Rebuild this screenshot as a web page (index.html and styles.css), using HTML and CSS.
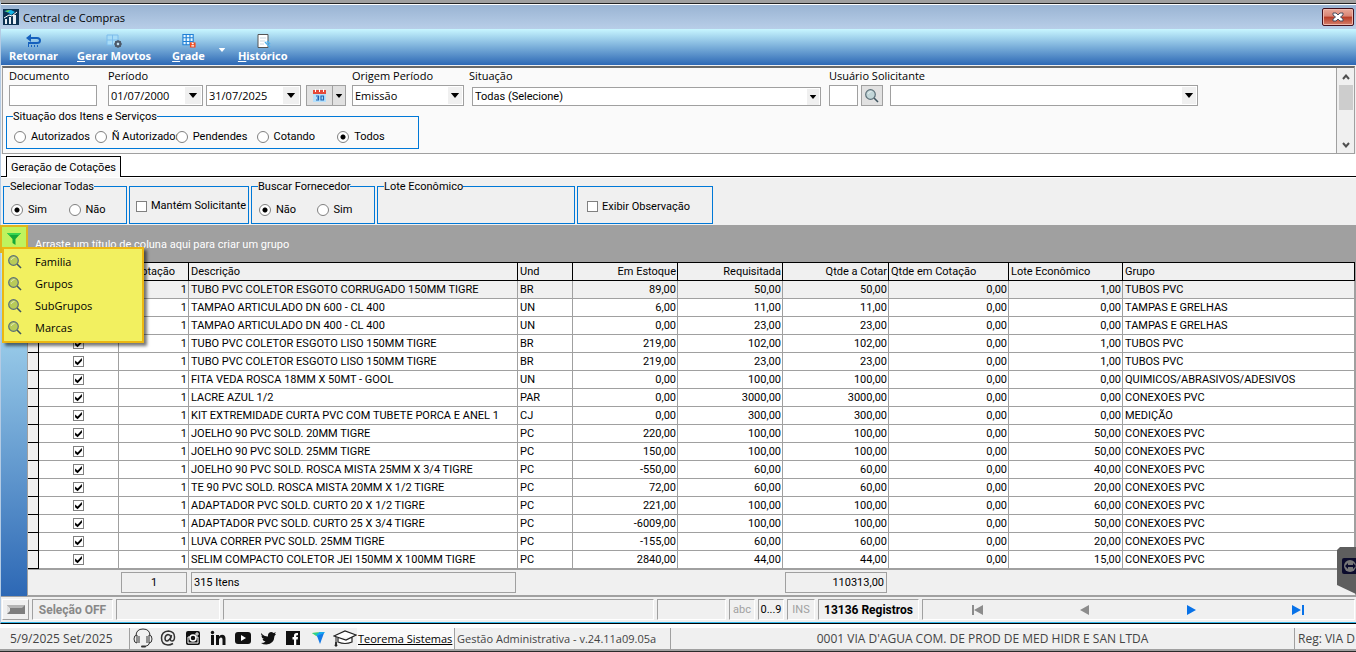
FILE: index.html
```html
<!DOCTYPE html>
<html lang="pt-BR">
<head>
<meta charset="utf-8">
<title>Central de Compras</title>
<link rel="stylesheet" href="styles.css">
</head>
<body>
<svg width="0" height="0" class="defs" aria-hidden="true">
  <symbol id="lens" viewBox="0 0 16 16"><path d="M10 10l4 4" stroke="#3f5560" stroke-width="1.600"/><circle cx="6.500" cy="6.500" r="4.800" fill="currentColor" stroke="#5c6f78" stroke-width="1.200"/><path d="M4 6q1-2.500 3.500-2.500" fill="none" stroke="#fff" opacity=".6"/></symbol>
  <symbol id="down" viewBox="0 0 10 6"><path d="M0 0h10L5 6z" fill="currentColor"/></symbol>
</svg>
<div class="window">
  <header class="titlebar">
    <svg class="app-icon" viewBox="0 0 16 16"><rect width="16" height="16" fill="#0c3152"/><path d="M1 2l7-1 4 2-4 3-2-2z" fill="#12b5e8"/><path d="M2 2l5-1-2 2z" fill="#7ee03a"/><path d="M2 15v-5h2v5zM6 15V8h2v7zM10 15V6h3v9z" fill="#e6eef5"/><path d="M1 9l5-3 3 1 5-4" stroke="#fff" fill="none"/></svg>
    <h1>Central de Compras</h1>
    <button class="close" aria-label="Fechar"><svg viewBox="0 0 12 10"><path d="M1 1h3l2 2 2-2h3v2L8.500 5 11 7v2H8L6 7 4 9H1V7l2.500-2L1 3z" fill="#fff" stroke="#4a4f60"/></svg></button>
  </header>
  <nav class="toolbar">
    <button class="tool t-ret"><svg viewBox="0 0 16 14"><path d="M4 4h7q3 0 3 2.500T11 9H2" fill="none" stroke="#1560bd" stroke-width="2"/><path d="M5 0v8L0 4z" fill="#1560bd"/><path d="M2.500 10v3M5.500 11v2M8.500 11v2M11.500 11v2" stroke="#1560bd"/></svg><span>Retornar</span></button>
    <button class="tool t-ger"><svg viewBox="0 0 16 14"><path d="M1 1h11v10H1zM6.500 1v10M1 6h11" fill="#a8dcf7" stroke="#7cbcec"/><circle cx="12" cy="10" r="2.400" fill="none" stroke="#4d5968" stroke-width="2"/><path d="M12 6v8M8 10h8M9.200 7.200l5.600 5.600M14.800 7.200l-5.600 5.600" stroke="#4d5968"/><circle cx="12" cy="10" r="1.200" fill="#c8e4f4"/></svg><span><u>G</u>erar Movtos</span></button>
    <button class="tool t-gra"><svg viewBox="0 0 16 15"><path d="M1.500.5h11v11h-11zM5 .5v11M9 .5v11M1.500 4h11M1.500 8h11" fill="#e8f8ff" stroke="#1f7fd6" stroke-width="1.200"/><rect x="9" y="9" width="6" height="5.500" fill="#f04a1c"/><path d="M11 9.500h2v1.500h-2zM10.500 12h3v1.500h-3z" fill="#fff"/></svg><span><u>G</u>rade</span></button>
    <button class="tool-more" aria-label="Mais opções de grade"><svg viewBox="0 0 10 6"><use href="#down"/></svg></button>
    <button class="tool t-his"><svg viewBox="0 0 16 14"><path d="M3 .5h10v13H3z" fill="#fff" stroke="#555"/><path d="M5 4h6M5 7h5M5 10h4" stroke="#c9d6df"/><path d="M10 8l5 5M12 7l3 3" stroke="#4fb2ee" stroke-width="1.500"/></svg><span><u>H</u>istórico</span></button>
  </nav>

  <section class="filters">
    <div class="filters-main">
      <div class="filter-row">
        <div class="field f-doc"><label for="doc">Documento</label><input id="doc" type="text"></div>
        <div class="field f-per"><label for="d1">Período</label>
          <div class="line">
            <div class="combo date"><input id="d1" type="text" value="01/07/2000"><button aria-label="Abrir calendário inicial"><svg viewBox="0 0 10 6"><use href="#down"/></svg></button></div>
            <div class="combo date"><input aria-label="Data final" type="text" value="31/07/2025"><button aria-label="Abrir calendário final"><svg viewBox="0 0 10 6"><use href="#down"/></svg></button></div>
            <div class="split"><button aria-label="Calendário"><svg viewBox="0 0 13 14"><path d="M0 1h13v4H0z" fill="#e5493a"/><path d="M2.500 0v3M6.500 0v3M10.500 0v3" stroke="#fff"/><path d="M0 5h13v8H0z" fill="#b5e0fb"/><path d="M3 7h2.500v4H3M4 9h1.500M8 7h2.500v4H8z" fill="none" stroke="#1b63b5" stroke-width="1.200"/></svg></button><button class="narrow" aria-label="Opções de calendário"><svg class="small" viewBox="0 0 10 6"><use href="#down"/></svg></button></div>
          </div>
        </div>
        <div class="field f-ori"><label for="ori">Origem Período</label><div class="select"><select id="ori"><option>Emissão</option></select><svg viewBox="0 0 10 6"><use href="#down"/></svg></div></div>
        <div class="field f-sit"><label for="sit">Situação</label><div class="select low"><select id="sit"><option>Todas (Selecione)</option></select><svg class="small" viewBox="0 0 10 6"><use href="#down"/></svg></div></div>
        <div class="field f-usr"><label for="usr">Usuário Solicitante</label>
          <div class="line"><input id="usr" class="code" type="text"><button class="search" aria-label="Buscar usuário"><svg viewBox="0 0 16 16"><use href="#lens"/></svg></button>
          <div class="select who"><select aria-label="Nome do solicitante"><option></option></select><svg viewBox="0 0 10 6"><use href="#down"/></svg></div></div>
        </div>
      </div>
      <fieldset class="group situ"><legend>Situação dos Itens e Serviços</legend>
        <label><input type="radio" name="s"><span>Autorizados</span></label>
        <label><input type="radio" name="s"><span>Ñ Autorizados</span></label>
        <label><input type="radio" name="s"><span>Pendendes</span></label>
        <label><input type="radio" name="s"><span>Cotando</span></label>
        <label><input type="radio" name="s" checked><span>Todos</span></label>
      </fieldset>
    </div>
    <div class="scroll">
      <button aria-label="Rolar para cima"><svg viewBox="0 0 8 6"><path d="M1 5l3-3.500L7 5" fill="none" stroke="#505050" stroke-width="2"/></svg></button>
      <div class="thumb"></div>
      <button class="end" aria-label="Rolar para baixo"><svg viewBox="0 0 8 6"><path d="M1 1l3 3.500L7 1" fill="none" stroke="#505050" stroke-width="2"/></svg></button>
    </div>
  </section>

  <div class="tabs" role="tablist"><button class="tab" role="tab" aria-selected="true">Geração de Cotações</button></div>

  <section class="options">
    <fieldset class="group pair"><legend>Selecionar Todas</legend>
      <label><input type="radio" name="t" checked><span>Sim</span></label><label><input type="radio" name="t"><span>Não</span></label></fieldset>
    <div class="group check w1"><label><input type="checkbox"><span>Mantém Solicitante</span></label></div>
    <fieldset class="group pair"><legend>Buscar Fornecedor</legend>
      <label><input type="radio" name="f" checked><span>Não</span></label><label><input type="radio" name="f"><span>Sim</span></label></fieldset>
    <fieldset class="group lote"><legend>Lote Econômico</legend></fieldset>
    <div class="group check w2"><label><input type="checkbox"><span>Exibir Observação</span></label></div>
  </section>

  <main class="work">
    <aside class="side">
      <button class="filter-btn" aria-label="Filtrar"><svg viewBox="0 0 14 13"><path d="M0 0h14L8.500 6v6l-3-2V6z" fill="#14a838"/><path d="M0 0h14l-2 2H2z" fill="#35d34f"/></svg></button>
      <div class="menu" role="menu">
        <button role="menuitem"><svg viewBox="0 0 16 16"><use href="#lens"/></svg>Familia</button>
        <button role="menuitem"><svg viewBox="0 0 16 16"><use href="#lens"/></svg>Grupos</button>
        <button role="menuitem"><svg viewBox="0 0 16 16"><use href="#lens"/></svg>SubGrupos</button>
        <button role="menuitem"><svg viewBox="0 0 16 16"><use href="#lens"/></svg>Marcas</button>
      </div>
    </aside>
    <div class="grid">
      <p class="drop">Arraste um título de coluna aqui para criar um grupo</p>
      <table>
        <colgroup><col class="c0"><col class="c1"><col class="c2"><col class="c3"><col class="c4"><col class="c5"><col class="c5"><col class="c6"><col class="c7"><col class="c8"><col></colgroup>
        <thead><tr><th></th><th></th><th>Cotação</th><th>Descrição</th><th>Und</th><th class="n">Em Estoque</th><th class="n">Requisitada</th><th class="n">Qtde a Cotar</th><th>Qtde em Cotação</th><th>Lote Econômico</th><th>Grupo</th></tr></thead>
        <tbody>
        <tr class="current"><td></td><td><input type="checkbox" aria-label="Selecionar item 1" checked></td><td>1</td><td>TUBO PVC COLETOR ESGOTO CORRUGADO 150MM TIGRE</td><td>BR</td><td>89,00</td><td>50,00</td><td>50,00</td><td>0,00</td><td>1,00</td><td>TUBOS PVC</td></tr>
        <tr><td></td><td><input type="checkbox" aria-label="Selecionar item 2" checked></td><td>1</td><td>TAMPAO ARTICULADO DN 600 - CL 400</td><td>UN</td><td>6,00</td><td>11,00</td><td>11,00</td><td>0,00</td><td>0,00</td><td>TAMPAS E GRELHAS</td></tr>
        <tr><td></td><td><input type="checkbox" aria-label="Selecionar item 3" checked></td><td>1</td><td>TAMPAO ARTICULADO DN 400 - CL 400</td><td>UN</td><td>0,00</td><td>23,00</td><td>23,00</td><td>0,00</td><td>0,00</td><td>TAMPAS E GRELHAS</td></tr>
        <tr><td></td><td><input type="checkbox" aria-label="Selecionar item 4" checked></td><td>1</td><td>TUBO PVC COLETOR ESGOTO LISO 150MM TIGRE</td><td>BR</td><td>219,00</td><td>102,00</td><td>102,00</td><td>0,00</td><td>1,00</td><td>TUBOS PVC</td></tr>
        <tr><td></td><td><input type="checkbox" aria-label="Selecionar item 5" checked></td><td>1</td><td>TUBO PVC COLETOR ESGOTO LISO 150MM TIGRE</td><td>BR</td><td>219,00</td><td>23,00</td><td>23,00</td><td>0,00</td><td>1,00</td><td>TUBOS PVC</td></tr>
        <tr><td></td><td><input type="checkbox" aria-label="Selecionar item 6" checked></td><td>1</td><td>FITA VEDA ROSCA 18MM X 50MT - GOOL</td><td>UN</td><td>0,00</td><td>100,00</td><td>100,00</td><td>0,00</td><td>0,00</td><td>QUIMICOS/ABRASIVOS/ADESIVOS</td></tr>
        <tr><td></td><td><input type="checkbox" aria-label="Selecionar item 7" checked></td><td>1</td><td>LACRE AZUL 1/2</td><td>PAR</td><td>0,00</td><td>3000,00</td><td>3000,00</td><td>0,00</td><td>0,00</td><td>CONEXOES PVC</td></tr>
        <tr><td></td><td><input type="checkbox" aria-label="Selecionar item 8" checked></td><td>1</td><td>KIT EXTREMIDADE CURTA PVC COM TUBETE PORCA E ANEL 1</td><td>CJ</td><td>0,00</td><td>300,00</td><td>300,00</td><td>0,00</td><td>0,00</td><td>MEDIÇÃO</td></tr>
        <tr><td></td><td><input type="checkbox" aria-label="Selecionar item 9" checked></td><td>1</td><td>JOELHO 90 PVC SOLD. 20MM TIGRE</td><td>PC</td><td>220,00</td><td>100,00</td><td>100,00</td><td>0,00</td><td>50,00</td><td>CONEXOES PVC</td></tr>
        <tr><td></td><td><input type="checkbox" aria-label="Selecionar item 10" checked></td><td>1</td><td>JOELHO 90 PVC SOLD. 25MM TIGRE</td><td>PC</td><td>150,00</td><td>100,00</td><td>100,00</td><td>0,00</td><td>50,00</td><td>CONEXOES PVC</td></tr>
        <tr><td></td><td><input type="checkbox" aria-label="Selecionar item 11" checked></td><td>1</td><td>JOELHO 90 PVC SOLD. ROSCA MISTA 25MM X 3/4 TIGRE</td><td>PC</td><td>-550,00</td><td>60,00</td><td>60,00</td><td>0,00</td><td>40,00</td><td>CONEXOES PVC</td></tr>
        <tr><td></td><td><input type="checkbox" aria-label="Selecionar item 12" checked></td><td>1</td><td>TE 90 PVC SOLD. ROSCA MISTA 20MM X 1/2 TIGRE</td><td>PC</td><td>72,00</td><td>60,00</td><td>60,00</td><td>0,00</td><td>20,00</td><td>CONEXOES PVC</td></tr>
        <tr><td></td><td><input type="checkbox" aria-label="Selecionar item 13" checked></td><td>1</td><td>ADAPTADOR PVC SOLD. CURTO 20 X 1/2 TIGRE</td><td>PC</td><td>221,00</td><td>100,00</td><td>100,00</td><td>0,00</td><td>60,00</td><td>CONEXOES PVC</td></tr>
        <tr><td></td><td><input type="checkbox" aria-label="Selecionar item 14" checked></td><td>1</td><td>ADAPTADOR PVC SOLD. CURTO 25 X 3/4 TIGRE</td><td>PC</td><td>-6009,00</td><td>100,00</td><td>100,00</td><td>0,00</td><td>50,00</td><td>CONEXOES PVC</td></tr>
        <tr><td></td><td><input type="checkbox" aria-label="Selecionar item 15" checked></td><td>1</td><td>LUVA CORRER PVC SOLD. 25MM TIGRE</td><td>PC</td><td>-155,00</td><td>60,00</td><td>60,00</td><td>0,00</td><td>20,00</td><td>CONEXOES PVC</td></tr>
        <tr><td></td><td><input type="checkbox" aria-label="Selecionar item 16" checked></td><td>1</td><td>SELIM COMPACTO COLETOR JEI 150MM X 100MM TIGRE</td><td>PC</td><td>2840,00</td><td>44,00</td><td>44,00</td><td>0,00</td><td>15,00</td><td>CONEXOES PVC</td></tr>
        </tbody>
      </table>
      <div class="totals"><output class="count">1</output><output class="items">315 Itens</output><output class="sum">110313,00</output></div>
    </div>
    <button class="remote" aria-label="Acesso remoto"><svg viewBox="0 0 14 16"><rect width="16" height="16" rx="2" fill="#0b0b2c"/><circle cx="8" cy="8" r="6" fill="#777"/><path d="M3 8l3-3v2h5V5l3 3-3 3V9H6v2z" fill="#0b0b2c"/></svg></button>
  </main>

  <footer class="status">
    <button class="cell s-key" aria-label="Painel"><svg viewBox="0 0 18 9"><path d="M0 0h18v9H0z" fill="#7e7e7e"/><path d="M0 0h18l-3 3H3z" fill="#b5b5b5"/><path d="M0 0l3 3v3L0 9z" fill="#e2e2e2"/></svg></button>
    <span class="cell s-sel">Seleção OFF</span><span class="cell s-a"></span><span class="cell s-b"></span><span class="cell s-c"></span>
    <span class="cell s-d off">abc</span><span class="cell s-d">0...9</span><span class="cell s-e off">INS</span><span class="cell s-reg">13136 Registros</span>
    <div class="cell s-nav">
      <button aria-label="Primeiro"><svg viewBox="0 0 12 10"><path d="M1 0h2v10H1zM12 0v10L3 5z" fill="#8c8c8c"/></svg></button>
      <button aria-label="Anterior"><svg viewBox="0 0 12 10"><path d="M11 0v10L2 5z" fill="#8c8c8c"/></svg></button>
      <button aria-label="Próximo"><svg viewBox="0 0 12 10"><path d="M2 0v10l9-5z" fill="#0872e8"/></svg></button>
      <button aria-label="Último"><svg viewBox="0 0 12 10"><path d="M0 0v10l9-5zM10 0h2v10h-2z" fill="#0872e8"/></svg></button>
    </div>
  </footer>
</div>

<footer class="appbar">
  <time class="ab-date">5/9/2025 Set/2025</time>
  <nav class="social">
    <a href="#" aria-label="Suporte"><svg viewBox="0 0 20 20"><path d="M3 8q0-7 7-7t7 7M17 14q-1 4-5 4.500" fill="none" stroke="#333"/><path d="M4 7v8Q1 15 1 11t3-4zM16 7v8q3 0 3-4t-3-4zM6 8v7M14 8v7" fill="#eee" stroke="#333"/><rect x="8" y="17.500" width="5" height="2" rx="1" fill="#333"/></svg></a>
    <a href="#" aria-label="E-mail"><svg viewBox="0 0 20 20"><path d="M15 15.500Q12.500 17 10 17q-6.500-.5-6.500-7t7-7q6 .5 6 6 0 4-2.500 4t-1.200-3.500L13.500 7" fill="none" stroke="#333" stroke-width="1.500"/><path d="M13 9q-1-2.500-3-2.500-2.500.5-3 3.500 0 3 2 3T13 9z" fill="none" stroke="#333" stroke-width="1.500"/></svg></a>
    <a href="#" aria-label="Instagram"><svg viewBox="0 0 20 20"><rect x="3" y="3" width="14" height="14" rx="2" fill="#111"/><path d="M5 9h2.500M12.500 9H15v6H5V9M13 5h2v2h-2z" fill="none" stroke="#fff"/><circle cx="10" cy="10" r="3" fill="#111" stroke="#fff" stroke-width="1.500"/></svg></a>
    <a href="#" aria-label="LinkedIn"><svg viewBox="0 0 20 20"><path d="M3 7h3v10H3zM8 7h3v1.500Q12 6.800 14 6.800q3.500 0 3.500 4V17h-3v-5.500q0-2-1.500-2t-2 2V17H8z" fill="#111"/><circle cx="4.500" cy="4.500" r="1.700" fill="#111"/></svg></a>
    <a href="#" aria-label="YouTube"><svg viewBox="0 0 20 20"><rect x="2" y="4" width="16" height="12" rx="3" fill="#111"/><path d="M8 7v6l5-3z" fill="#fff"/></svg></a>
    <a href="#" aria-label="Twitter"><svg viewBox="0 0 20 20"><path d="M3 5q3 3.500 7 3.500Q9.500 4.500 13 4q1.500 0 2.500 1L18 4.200 16.800 6 18 6l-1.500 2Q16 16 8.500 16.500q-3.500 0-5.500-1.500 3 0 4.500-1.500-2.500-.5-3-2.500H6Q3.500 10 3.300 7.500l1.200.3Q2.500 6.500 3 5z" fill="#111"/></svg></a>
    <a href="#" aria-label="Facebook"><svg viewBox="0 0 20 20"><rect x="3" y="3" width="14" height="14" fill="#111"/><path d="M11 17v-5.500H9.500V9H11V7.500Q11 5 13.500 5H15v2.200h-1q-.8 0-.8.800v1H15l-.3 2.500h-1.500V17z" fill="#fff"/></svg></a>
    <a href="#" aria-label="Teorema"><svg viewBox="0 0 20 20"><path d="M4 5l9-1-5 4z" fill="#8fe02d"/><path d="M4 5l6-.5L11 9z" fill="#27cf9a"/><path d="M8 8l3-4 6 0-4 5z" fill="#16aaf0"/><path d="M9 8l7-3-4 11z" fill="#1479e6"/></svg></a>
    <a href="#" class="wide" aria-label="Academia"><svg viewBox="0 0 24 20"><path d="M1 8l11-5 11 4-10 5zM5 10v4q7 3 14 0V9" fill="#fff" stroke="#222" stroke-width="1.200"/><path d="M3 9v6M3 14l-1 4h2z" stroke="#222" fill="#222"/></svg></a>
  </nav>
  <a class="brand" href="#">Teorema Sistemas</a>
  <span class="ab-ver">Gestão Administrativa - v.24.11a09.05a</span>
  <span class="ab-company">0001 VIA D'AGUA COM. DE PROD DE MED HIDR E SAN LTDA</span>
  <span class="ab-reg">Reg: VIA D</span>
</footer>
</body>
</html>
```

FILE: styles.css
```css
* { box-sizing: border-box; }
body { margin: 0; min-height: 100vh; overflow: hidden; background: #2a2a2a; color: #000; font: 11px/14px Roboto, "Liberation Sans", sans-serif; }
button, input, select { font: inherit; color: inherit; margin: 0; }
button { padding: 0; border: 0; background: none; }
svg { display: block; }
.defs { position: absolute; }

.window { background: #f0f0f0; border-top: 3px solid #a0a0a0; border-left: 1px solid #b4cbe4; border-bottom: 1px solid #000; box-shadow: inset 0 1px #222; padding-top: 1px; }

.titlebar { display: flex; align-items: center; height: 25px; padding: 0 2px; gap: 4px; border-top: 1px solid #fff; background: linear-gradient(#9ab4d3, #b8cee8); }
.app-icon { width: 16px; height: 16px; }
h1 { margin: 0; flex: 1; padding-top: 2px; font: 11px/16px "Open Sans", sans-serif; }
.close { display: grid; place-items: center; width: 32px; height: 18px; border: 1px solid #43101c; border-radius: 2px; background: linear-gradient(#e9a898, #d98474 45%, #b83a24 50%, #d4806c); box-shadow: inset 0 0 0 1px #efb7ac; }
.close svg { width: 12px; height: 10px; }

.toolbar { display: flex; height: 36px; padding: 5px 8px 0; background: linear-gradient(#c8f6ff, #2d68b5); color: #fff; font: bold 11px/15px "Noto Sans", "Open Sans", sans-serif; }
.tool { display: flex; flex-direction: column; align-items: center; }
.tool svg { width: 16px; height: 14px; }
.t-ger { margin-left: 19px; }
.t-gra { margin-left: 21px; }
.t-his { margin-left: 12px; }
.tool-more { align-self: center; margin-left: 13px; }
.tool-more svg { width: 8px; height: 4px; }

.filters { display: flex; margin: 1px 1px 0; height: 88px; border: 1px solid #a0a0a0; border-top: 2px solid #696969; background: #fafafa; }
.filters-main { flex: 1; min-width: 0; padding: 0 3px; }
.filter-row { display: flex; align-items: flex-end; padding-left: 3px; }
.field { display: flex; flex-direction: column; font: 11px/15px "Open Sans", sans-serif; }
.field > label { padding-bottom: 2px; }
.line { display: flex; }
.f-doc { width: 88px; }
.f-per { margin-left: 11px; }
.f-per .line { gap: 3px; }
.f-ori { width: 112px; margin-left: 6px; }
.f-sit { width: 352px; margin-left: 5px; }
.f-usr { margin-left: 8px; }
.field input, select { height: 21px; width: 100%; min-width: 0; border: 1px solid #a0a0a0; border-radius: 0; background: #fff; padding: 0 2px; font-size: 11px; }
.combo { display: flex; align-items: center; border: 1px solid #a0a0a0; background: #fff; height: 21px; }
.date { width: 95px; }
.combo input { flex: 1; height: 19px; border: 0; }
.combo button { display: grid; place-items: center; width: 16px; height: 17px; margin-right: 1px; background: #f0f0f0; }
.combo svg, .select svg { width: 10px; height: 5px; }
.split { display: flex; height: 21px; border: 1px solid #a0a0a0; background: #e1e1e1; margin-left: 2px; }
.split button { display: grid; place-items: center; width: 25px; }
.split .narrow { width: 13px; border-left: 1px solid #a0a0a0; }
.split svg { width: 13px; height: 14px; }
.split .small, .select .small { width: 8px; height: 4px; }
.select { display: grid; align-items: center; }
select { grid-area: 1 / 1; appearance: none; }
.select svg { grid-area: 1 / 1; justify-self: end; box-sizing: content-box; background: #f0f0f0; padding: 6px 2px; margin-right: 2px; pointer-events: none; }
.low { margin: 2px 0 0 3px; }
.low select { height: 19px; font: 11px/14px Roboto, "Liberation Sans", sans-serif; }
.field .code { width: 29px; }
.search { display: grid; place-items: center; width: 22px; height: 21px; margin: 0 7px 0 3px; border: 1px solid #a0a0a0; background: #e1e1e1; color: #c2d6d8; }
.search svg { width: 16px; height: 16px; }
.who { width: 308px; }

.group { display: flex; align-items: center; min-width: 0; margin: 0; padding: 0; border: 1px solid #0078d7; }
legend { margin-left: -1px; padding: 0; height: 14px; line-height: 16px; }
.group label { display: flex; align-items: center; gap: 5px; white-space: nowrap; }
.situ { width: 413px; margin-top: 3px; padding: 7px 0 4px 7px; }
.situ label { width: 81px; }
input[type="radio"] { flex: none; appearance: none; width: 12px; height: 12px; border: 1px solid #808080; border-radius: 50%; background: #fff; }
input[type="radio"]:checked { background: radial-gradient(circle, #000 2px, #fff 3px); }
input[type="checkbox"] { flex: none; display: block; appearance: none; width: 11px; height: 11px; border: 1px solid #808080; background: #fff; }
input[type="checkbox"]:checked::before { content: ""; display: block; width: 9px; height: 9px; background: #000; clip-path: polygon(12% 40%, 40% 62%, 88% 10%, 88% 42%, 40% 92%, 12% 70%); }

.scroll { display: flex; flex-direction: column; align-items: center; width: 18px; border-left: 1px solid #a0a0a0; background: #f0f0f0; }
.scroll button { display: grid; place-items: center; width: 16px; height: 17px; }
.scroll svg { width: 8px; height: 6px; }
.scroll .end { margin-top: auto; }
.thumb { width: 14px; height: 25px; background: #cdcdcd; }

.tabs { display: flex; height: 23px; padding: 2px 5px 0; background: linear-gradient(#000, #000) 0 100% / 100% 1px no-repeat #fff; }
.tab { padding: 1px 4px 0; border: 1px solid #000; border-bottom: 0; background: #fafafa; white-space: nowrap; }

.options { display: flex; align-items: flex-end; gap: 2px; height: 48px; padding: 0 2px 1px; border-top: 1px solid #fff; }
.options .group { height: 38px; }
.options fieldset.group { height: 45px; padding-left: 7px; }
.pair { width: 124px; }
.pair label { width: 58px; padding-top: 4px; }
.w1 { width: 120px; padding: 2px 0 0 6px; }
.w2 { width: 136px; padding: 3px 0 0 9px; }
.group.check label { gap: 4px; }
.lote { width: 198px; }

.work { position: relative; display: flex; background: #a0a0a0; }
.side { width: 26px; background: linear-gradient(#c8f6ff, #2d68b5); }
.filter-btn { position: absolute; z-index: 2; top: 0; left: -1px; display: grid; place-items: center; width: 28px; height: 28px; border: 2px solid #e0b51c; background: #bff35e; }
.filter-btn svg { width: 14px; height: 13px; }
.menu { position: absolute; z-index: 3; top: 22px; left: 1px; width: 142px; padding: 2px 0; border: 2px solid #ecb711; background: #f2f060; box-shadow: 3px 3px 3px #0008; font: 11px/16px "Open Sans", sans-serif; }
.menu button { display: flex; align-items: center; gap: 12px; width: 100%; height: 22px; padding-left: 3px; color: #000; }
.menu svg { width: 16px; height: 16px; color: #b8cb58; }

.grid { flex: 1; min-width: 0; padding: 0 1px 0 1px; background: #a0a0a0; }
.drop { margin: 0; height: 37px; padding: 13px 7px 0; color: #fff; line-height: 14px; }
table { width: 100%; table-layout: fixed; border-collapse: separate; border-spacing: 0; background: #fff; border-top: 1px solid #000; }
.c0 { width: 11px; } .c1 { width: 80px; } .c2 { width: 70px; } .c3 { width: 329px; } .c4 { width: 55px; }
.c5 { width: 105px; } .c6 { width: 106px; } .c7 { width: 120px; } .c8 { width: 114px; }
th, td { height: 18px; padding: 0 2px; border-right: 1px solid #a0a0a0; border-bottom: 1px solid #a0a0a0; overflow: hidden; white-space: nowrap; line-height: 14px; text-align: left; font-weight: normal; }
th { border-color: #000; background: #f0f0f0; }
th:nth-child(3) { padding-left: 15px; }
td:nth-child(4) { padding-right: 0; }
td:first-child { background: #f0f0f0; border-color: #000; }
td:nth-child(2) input { margin: 0 auto; }
.n, td:nth-child(3), td:nth-child(n+6):nth-child(-n+10) { text-align: right; padding-right: 1px; }
.current td { background: #f0f0f0; }
.totals { display: grid; grid-template-columns: 91px 70px 329px 265px 106px 1fr; height: 26px; margin-top: 1px; padding: 2px 0 3px; background: #f0f0f0; border-bottom: 1px solid #a0a0a0; }
.totals output { border: 1px solid #a0a0a0; margin: 0 2px; padding: 0 2px; line-height: 19px; }
.totals .count { grid-column: 2; text-align: center; }
.sum { grid-column: 5; text-align: right; }
.remote { position: absolute; right: 0; bottom: 2px; width: 19px; height: 47px; padding: 0 0 10px 5px; background: #5e5e5e; clip-path: polygon(3px 0, 100% 0, 100% 100%, 0 38px, 0 3px); }
.remote svg { width: 14px; height: 16px; }

.status { display: flex; gap: 3px; height: 27px; padding: 2px 1px; border-top: 1px solid #a0a0a0; border-bottom: 1px solid #35b6e8; }
.cell { display: grid; place-items: center; border: 1px solid #fff; border-top-color: #a0a0a0; border-left-color: #a0a0a0; white-space: nowrap; }
.s-key { width: 27px; border-color: #fff #a0a0a0 #a0a0a0 #fff; }
.s-key svg { width: 18px; height: 9px; }
.s-sel { width: 81px; color: #888; font-weight: bold; font-size: 12px; }
.s-a { width: 104px; }
.s-b { width: 431px; }
.s-c { width: 69px; }
.s-d { width: 26px; }
.s-e { width: 28px; }
.off { color: #a0a0a0; }
.s-reg { width: 101px; font-weight: bold; font-size: 12px; }
.s-nav { flex: 1; grid-template-columns: repeat(4, 1fr); padding-right: 3px; }
.s-nav svg { width: 12px; height: 10px; }

.appbar { display: flex; height: 27px; border-top: 4px solid #fff; border-bottom: 2px solid #a0a0a0; background: #f0f0f0; color: #444; font: 12px/21px "Open Sans", sans-serif; white-space: nowrap; overflow: hidden; }
.ab-date { flex: none; width: 130px; padding-left: 10px; border-right: 1px solid #a0a0a0; }
.social { flex: none; display: flex; gap: 5px; padding-left: 3px; }
.social svg { width: 20px; height: 20px; }
.social .wide svg { width: 24px; }
.brand { flex: none; width: 98px; padding-left: 1px; color: #000; background: #fafafa; border-right: 1px solid #a0a0a0; font-size: 11px; }
.ab-ver { flex: none; width: 216px; padding-left: 2px; border-right: 1px solid #a0a0a0; font-size: 11px; }
.ab-company { flex: 1; text-align: center; }
.ab-reg { flex: none; width: 62px; padding-left: 3px; border-left: 1px solid #a0a0a0; }
```
